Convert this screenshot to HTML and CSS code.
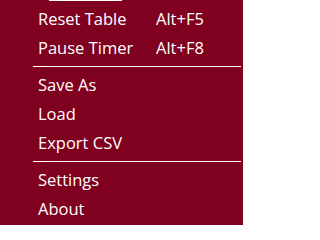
FILE: index.html
```html
<!DOCTYPE html>
<html>
<head>
<meta charset="utf-8">
<link rel="stylesheet" href="styles.css">
</head>
<body>
<div class="menu">
  <div class="top-edge"></div>
  <div class="item"><span class="label">Reset Table</span><span class="key">Alt+F5</span></div>
  <div class="item"><span class="label">Pause Timer</span><span class="key">Alt+F8</span></div>
  <div class="sep"></div>
  <div class="item"><span class="label">Save As</span></div>
  <div class="item"><span class="label">Load</span></div>
  <div class="item"><span class="label">Export CSV</span></div>
  <div class="sep"></div>
  <div class="item"><span class="label">Settings</span></div>
  <div class="item"><span class="label">About</span></div>
</div>
</body>
</html>
```
FILE: styles.css
```css
html, body {
  margin: 0;
  padding: 0;
  background: #ffffff;
}
.menu {
  width: 243px;
  height: 225px;
  background: #800020;
  color: #ffffff;
  font-family: "Open Sans", "Noto Sans", sans-serif;
  font-size: 16.5px;
  box-sizing: border-box;
  padding-top: 4px;
}
.top-edge {
  height: 1px;
  width: 73px;
  margin-left: 49px;
  margin-top: -4px;
  margin-bottom: 3px;
  background: #ffffff;
}
.item {
  display: grid;
  grid-template-columns: 118px auto;
  height: 29px;
  line-height: 29px;
  padding-left: 38px;
}
.sep {
  height: 1px;
  background: #ffffff;
  margin: 4px 2px 3px 33px;
}
```
